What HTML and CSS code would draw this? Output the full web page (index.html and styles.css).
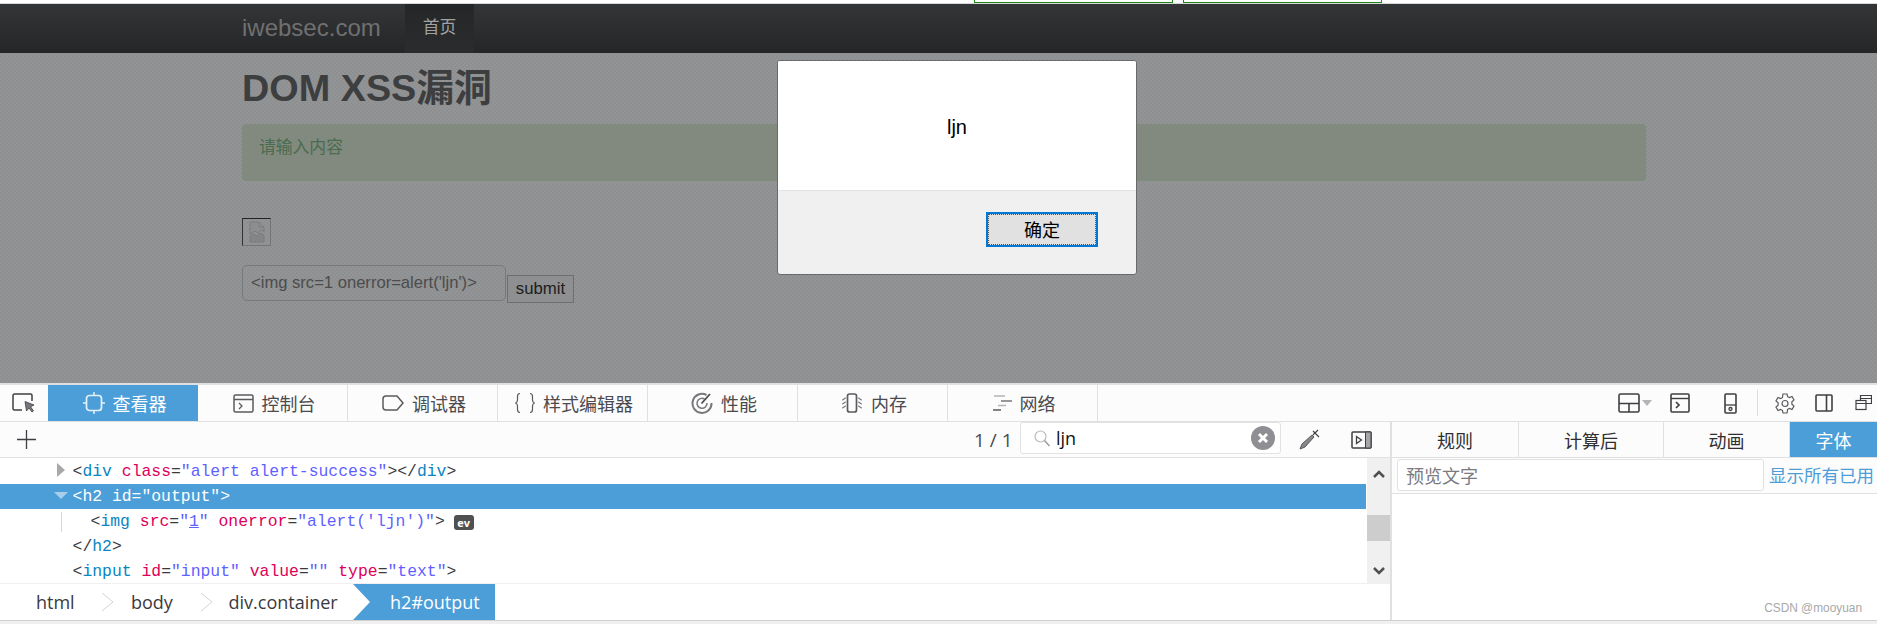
FILE: index.html
```html
<!DOCTYPE html>
<html lang="zh-CN">
<head>
<meta charset="utf-8">
<title>DOM XSS漏洞</title>
<link rel="stylesheet" href="styles.css">
</head>
<body>
<section class="page">
  <div class="strip"><span class="greenbox"></span><span class="greenbox second"></span></div>
  <nav class="navbar">
    <a class="brand">iwebsec.com</a>
    <a class="navitem">首页</a>
  </nav>
  <main class="container">
    <h1 class="title">DOM XSS漏洞</h1>
    <div class="alert">请输入内容</div>
    <div class="brokenimg">
      <svg width="16" height="22" viewBox="0 0 16 22"><path d="M1 1h9l5 5v5l-3-2-3 3-3-2-5 3z" fill="#8d8e8f" stroke="#7b7c7d"/><path d="M10 1v5h5" fill="none" stroke="#7b7c7d"/><path d="M1 15l4-2 3 2 3-3 4 2v7H1z" fill="#848586" stroke="#7b7c7d"/></svg>
    </div>
    <form class="xssform">
      <input class="xssinput" type="text" value="<img src=1 onerror=alert('ljn')>">
      <button class="xssbtn" type="button">submit</button>
    </form>
  </main>
  <div class="dialog">
    <div class="dialog-body">ljn</div>
    <div class="dialog-foot"><button class="dialog-btn" type="button"><span class="dialog-btn-in">确定</span></button></div>
  </div>
</section>

<section class="devtools">
  <header class="tabbar">
    <div class="picker">
      <svg width="24" height="20" viewBox="0 0 24 20"><path d="M10 17H2.500A1.500 1.500 0 0 1 1 15.500V2.500A1.500 1.500 0 0 1 2.500 1h16A1.500 1.500 0 0 1 20 2.500V8" fill="none" stroke="#3f3f43" stroke-width="1.500"/><path d="M13 8.500l9 3.500-3.500 1.800 3 4-1.500 1.200-3-4L14.500 18z" fill="#77777b" stroke="#3f3f43" stroke-width=".8"/></svg>
    </div>
    <div class="tab active">
      <svg width="22" height="22" viewBox="0 0 22 22"><rect x="3.500" y="3.500" width="15" height="15" rx="3" fill="none" stroke="#e4f1fa" stroke-width="1.700"/><path d="M11 0v3M11 19v3M0 11h3M19 11h3" stroke="#e4f1fa" stroke-width="1.500"/></svg>
      <span>查看器</span>
    </div>
    <div class="tab">
      <svg width="21" height="21" viewBox="0 0 21 21"><rect x="1" y="2" width="19" height="17" rx="1.500" fill="none" stroke="#5b5b5f" stroke-width="1.500"/><path d="M1 6.500h19" stroke="#5b5b5f" stroke-width="1.500"/><path d="M6 10l3 3-3 3" fill="none" stroke="#5b5b5f" stroke-width="1.300"/></svg>
      <span>控制台</span>
    </div>
    <div class="tab">
      <svg width="22" height="18" viewBox="0 0 22 18"><path d="M4 2h11l6 7-6 7H4a3 3 0 0 1-3-3V5a3 3 0 0 1 3-3z" fill="none" stroke="#5b5b5f" stroke-width="1.500"/></svg>
      <span>调试器</span>
    </div>
    <div class="tab">
      <svg width="20" height="22" viewBox="0 0 20 22"><path d="M5 1.500c-2 0-2.500 1-2.500 3v3.500c0 1.500-.7 2.500-1.800 3 1.100.5 1.800 1.500 1.800 3v3.500c0 2 .5 3 2.500 3M15 1.500c2 0 2.500 1 2.500 3v3.500c0 1.500.7 2.500 1.800 3-1.100.5-1.800 1.500-1.800 3v3.500c0 2-.5 3-2.500 3" fill="none" stroke="#5b5b5f" stroke-width="1.200"/></svg>
      <span>样式编辑器</span>
    </div>
    <div class="tab">
      <svg width="22" height="22" viewBox="0 0 22 22"><path d="M15.500 3A9.500 9.500 0 1 0 20.500 11" fill="none" stroke="#77777b" stroke-width="2"/><path d="M13.500 7A5 5 0 1 0 16 11" fill="none" stroke="#77777b" stroke-width="1.500"/><path d="M10.500 11.500L19 2" stroke="#4a4a4f" stroke-width="1.800"/></svg>
      <span>性能</span>
    </div>
    <div class="tab">
      <svg width="22" height="20" viewBox="0 0 22 20"><rect x="6.500" y="1" width="9" height="18" rx="2" fill="none" stroke="#5b5b5f" stroke-width="1.700"/><path d="M5 5C3 5 3 7 1 7M5 9C3 9 3 11 1 11M5 13C3 13 3 15 1 15M17 5c2 0 2 2 4 2M17 9c2 0 2 2 4 2M17 13c2 0 2 2 4 2" fill="none" stroke="#77777b" stroke-width="1.100"/></svg>
      <span>内存</span>
    </div>
    <div class="tab">
      <svg width="19" height="18" viewBox="0 0 19 18"><path d="M1 2h11" stroke="#b5b5b8" stroke-width="1.500"/><path d="M8 7h11" stroke="#77777b" stroke-width="1.500"/><path d="M5 11.500h8" stroke="#b5b5b8" stroke-width="1.500"/><path d="M0 16h8" stroke="#5b5b5f" stroke-width="1.500"/></svg>
      <span>网络</span>
    </div>
    <div class="tools">
      <svg width="22" height="20" viewBox="0 0 22 20"><rect x="1" y="1" width="20" height="18" rx="1.500" fill="none" stroke="#3f3f43" stroke-width="1.600"/><path d="M1 10.500h20M11 10.500V19" stroke="#3f3f43" stroke-width="1.600"/></svg>
      <svg class="t-caret" width="10" height="6" viewBox="0 0 10 6"><path d="M0 0h10L5 6z" fill="#b4b4b8"/></svg>
      <svg class="t-console" width="20" height="20" viewBox="0 0 20 20"><rect x="1" y="1" width="18" height="18" rx="1" fill="none" stroke="#3f3f43" stroke-width="1.600"/><path d="M1 5.500h18" stroke="#3f3f43" stroke-width="1.400"/><path d="M6 9l3 3-3 3" fill="none" stroke="#3f3f43" stroke-width="1.700"/></svg>
      <svg class="t-phone" width="13" height="21" viewBox="0 0 13 21"><rect x="1" y="1" width="11" height="19" rx="1" fill="none" stroke="#3f3f43" stroke-width="1.600"/><path d="M1 12h11" stroke="#3f3f43" stroke-width="1.300"/><circle cx="6.500" cy="16" r="1.500" fill="none" stroke="#3f3f43" stroke-width="1.300"/></svg>
      <span class="t-sep"></span>
      <svg class="t-gear" width="20" height="21" viewBox="0 0 20 21"><path d="M8 1h4l.6 2.700 1.900.9 2.500-1.100 2 3.400-2.100 1.800v2.600l2.100 1.800-2 3.400-2.500-1.100-1.900.9L12 20H8l-.6-2.700-1.900-.9-2.500 1.100-2-3.400 2.100-1.800V9.700L1 7.900l2-3.400 2.500 1.100 1.900-.9z" fill="none" stroke="#5b5b5f" stroke-width="1.200"/><circle cx="10" cy="10.500" r="3" fill="none" stroke="#5b5b5f" stroke-width="1.200"/></svg>
      <svg class="t-side" width="18" height="18" viewBox="0 0 18 18"><rect x="1" y="1" width="16" height="16" rx="1" fill="none" stroke="#3f3f43" stroke-width="1.600"/><path d="M11.500 1v16" stroke="#3f3f43" stroke-width="1.600"/></svg>
      <svg class="t-win" width="17" height="18" viewBox="0 0 17 18"><path d="M5.500 6V1.500h11v8H11" fill="none" stroke="#3f3f43" stroke-width="1.200"/><path d="M5.500 4.500h11" stroke="#3f3f43" stroke-width="1"/><rect x="1" y="6.500" width="10" height="9" fill="none" stroke="#3f3f43" stroke-width="1.200"/><path d="M1 9.500h10" stroke="#3f3f43" stroke-width="1"/></svg>
    </div>
  </header>

  <div class="split">
    <div class="inspector">
      <div class="toolbar">
        <svg class="plus" width="19" height="19" viewBox="0 0 19 19"><path d="M9.500 0v19M0 9.500h19" stroke="#3f3f43" stroke-width="1.300"/></svg>
        <span class="count">1 / 1</span>
        <div class="search">
          <svg width="16" height="17" viewBox="0 0 16 17"><circle cx="6.500" cy="6.500" r="5.500" fill="none" stroke="#b8b8bb" stroke-width="1.200"/><path d="M10.500 10.500l5 5.500" stroke="#9a9a9e" stroke-width="1.500"/></svg>
          <span class="search-text">ljn</span>
          <svg class="clear" width="24" height="24" viewBox="0 0 24 24"><circle cx="12" cy="12" r="12" fill="#8f8f93"/><path d="M8 8l8 8M16 8l-8 8" stroke="#fff" stroke-width="3"/></svg>
        </div>
        <svg class="dropper" width="21" height="21" viewBox="0 0 21 21"><path d="M13 6L3 15l-2 5 5-2 9-10z" fill="#88888c" stroke="#5b5b5f" stroke-width="1"/><path d="M14 2l6 6M19 1l-5 5" stroke="#3f3f43" stroke-width="1.100"/></svg>
        <svg class="sidetoggle" width="21" height="18" viewBox="0 0 21 18"><rect x="1" y="1" width="19" height="16" rx="1" fill="none" stroke="#3f3f43" stroke-width="1.500"/><path d="M14.500 1h5.500v16h-5.500z" fill="#a5a5a8" stroke="#3f3f43"/><path d="M5.500 5.500l5 3.500-5 3.500z" fill="none" stroke="#3f3f43" stroke-width="1.300"/></svg>
      </div>
      <div class="markup-wrap">
        <div class="markup">
          <div class="row first"><i class="tw closed"></i><span class="p">&lt;</span><span class="t">div</span> <span class="a">class</span><span class="p">=</span><span class="v">"alert alert-success"</span><span class="p">&gt;&lt;/</span><span class="t">div</span><span class="p">&gt;</span></div>
          <div class="row selected"><i class="tw open"></i>&lt;h2 id="output"&gt;</div>
          <div class="row child"><span class="p">&lt;</span><span class="t">img</span> <span class="a">src</span><span class="p">=</span><span class="v">"<u>1</u>"</span> <span class="a">onerror</span><span class="p">=</span><span class="v">"alert('ljn')"</span><span class="p">&gt;</span> <span class="ev">ev</span></div>
          <div class="row"><i class="tw"></i><span class="p">&lt;/</span><span class="t">h2</span><span class="p">&gt;</span></div>
          <div class="row"><i class="tw"></i><span class="p">&lt;</span><span class="t">input</span> <span class="a">id</span><span class="p">=</span><span class="v">"input"</span> <span class="a">value</span><span class="p">=</span><span class="v">""</span> <span class="a">type</span><span class="p">=</span><span class="v">"text"</span><span class="p">&gt;</span></div>
        </div>
        <div class="scrollbar">
          <div class="sb-up"><svg width="12" height="8" viewBox="0 0 12 8"><path d="M1 7l5-5 5 5" fill="none" stroke="#505050" stroke-width="2.500"/></svg></div>
          <div class="sb-thumb"></div>
          <div class="sb-down"><svg width="12" height="8" viewBox="0 0 12 8"><path d="M1 1l5 5 5-5" fill="none" stroke="#505050" stroke-width="2.500"/></svg></div>
        </div>
      </div>
      <div class="crumbs">
        <span class="crumb c-html">html</span>
        <svg class="chev" width="13" height="36" viewBox="0 0 13 36"><path d="M1 9l11 9-11 9" fill="none" stroke="#d4d4d6"/></svg>
        <span class="crumb c-body">body</span>
        <svg class="chev" width="13" height="36" viewBox="0 0 13 36"><path d="M1 9l11 9-11 9" fill="none" stroke="#d4d4d6"/></svg>
        <span class="crumb c-div">div.container</span>
        <span class="crumb current">h2#output</span>
      </div>
    </div>
    <aside class="sidebar">
      <div class="side-tabs">
        <div class="stab s1">规则</div>
        <div class="stab s2">计算后</div>
        <div class="stab s3">动画</div>
        <div class="stab s4">字体</div>
      </div>
      <div class="fontbar">
        <input class="preview" type="text" placeholder="预览文字">
        <a class="showall">显示所有已用</a>
      </div>
      <div class="watermark">CSDN @mooyuan</div>
    </aside>
  </div>
</section>
<div class="foot"></div>
</body>
</html>
```
FILE: styles.css
```css
* { box-sizing: border-box; }
html, body { margin: 0; padding: 0; }
body {
  width: 1877px;
  height: 624px;
  overflow: hidden;
  position: relative;
  background: #fff;
  font-family: "Liberation Sans", "Noto Sans CJK SC", sans-serif;
}

/* page under the modal */
.page {
  position: relative;
  height: 383px;
  background-color: #909192;
  background-image: repeating-conic-gradient(rgba(255,255,255,.022) 0 25%, rgba(0,0,0,.012) 0 50%);
  background-size: 4px 4px;
}
.strip {
  height: 4px;
  background: #fff;
  border-bottom: 1px solid #d8d8d8;
  display: flex;
  padding-left: 974px;
  align-items: flex-start;
}
.greenbox {
  width: 199px;
  height: 3px;
  background: #fff;
  border: 1px solid #1b8a1b;
  border-top: 0;
}
.greenbox.second { margin-left: 10px; }
.navbar {
  height: 49px;
  display: flex;
  align-items: stretch;
  padding-left: 242px;
  background: linear-gradient(#343536, #252627);
}
.brand {
  width: 163px;
  line-height: 48px;
  font-size: 24px;
  color: #6f7071;
}
.navitem {
  width: 69px;
  line-height: 48px;
  text-align: center;
  font-size: 16.8px;
  color: #a0a1a2;
  background: linear-gradient(#252627, #2b2c2d);
}
.container {
  padding-left: 242px;
  width: 1646px;
}
.title {
  margin: 15px 0 0;
  font-size: 37.800px;
  line-height: 41px;
  font-weight: 700;
  color: #3d3e40;
}
.alert {
  margin-top: 15px;
  height: 57px;
  padding: 11px 16px;
  border: 1px solid #7d8c7b;
  border-radius: 4px;
  background: #828a7f;
  color: #4a6b4e;
  font-size: 16.8px;
  line-height: 24px;
}
.brokenimg {
  margin-top: 37px;
  width: 29px;
  height: 28px;
  border: 1px solid #747576;
  border-top-color: #222;
  border-left-color: #333;
  display: flex;
  align-items: center;
  justify-content: center;
}
.xssform {
  margin-top: 19px;
  display: flex;
  align-items: flex-start;
}
.xssinput {
  width: 264px;
  height: 36px;
  padding: 0 8px;
  border: 1px solid #78797a;
  border-radius: 5px;
  background: transparent;
  color: #4b4c4d;
  font: 16.6px "Liberation Sans", sans-serif;
}
.xssbtn {
  margin: 10px 0 0 1px;
  width: 67px;
  height: 28px;
  padding: 0;
  border: 1px solid #6e6f70;
  background: #8e8f90;
  color: #202020;
  font: 16.8px "Liberation Sans", sans-serif;
}

/* modal */
.dialog {
  position: absolute;
  left: 777px;
  top: 60px;
  width: 360px;
  height: 215px;
  border: 1px solid #6a6a6a;
  border-radius: 3px;
  background: #f0f0f0;
  overflow: hidden;
}
.dialog-body {
  height: 130px;
  padding-top: 4px;
  background: #fff;
  border-bottom: 1px solid #e4e4e4;
  display: flex;
  align-items: center;
  justify-content: center;
  font-size: 20px;
  color: #000;
}
.dialog-foot {
  display: flex;
  justify-content: flex-end;
  padding: 21px 38px 0 0;
}
.dialog-btn {
  width: 112px;
  height: 35px;
  padding: 0;
  background: #e1e1e1;
  border: 2px solid #0078d7;
  font: 18px "Noto Sans CJK SC", sans-serif;
  color: #000;
}
.dialog-btn-in {
  display: block;
  height: 100%;
  line-height: 29px;
  border: 1px dotted #555;
}

/* devtools */
.devtools {
  height: 237px;
  display: flex;
  flex-direction: column;
  font-family: "Noto Sans CJK SC", "Open Sans", sans-serif;
  color: #4a4a4f;
}
.tabbar {
  height: 39px;
  border-top: 2px solid #e0e0e2;
  border-bottom: 1px solid #e0e0e2;
  background: #fcfcfc;
  display: flex;
  align-items: stretch;
  flex: none;
}
.picker {
  width: 48px;
  padding-left: 12px;
  display: flex;
  align-items: center;
}
.tab {
  width: 150px;
  padding-left: 3px;
  border-right: 1px solid #e0e0e2;
  display: flex;
  align-items: center;
  justify-content: center;
  gap: 8px;
  font-size: 18px;
  line-height: 1;
}
.tab.active {
  background: #4c9ed9;
  color: #fff;
  border-right: 0;
}
.tools {
  margin-left: auto;
  display: flex;
  align-items: center;
  padding-right: 5px;
}
.t-caret { margin-left: 2px; }
.t-console { margin-left: 18px; }
.t-phone { margin-left: 34px; }
.t-sep {
  width: 1px;
  height: 26px;
  margin-left: 20px;
  background: #dcdcde;
}
.t-gear { margin-left: 17px; }
.t-side { margin-left: 20px; }
.t-win { margin-left: 22px; }

.split {
  flex: 1;
  display: flex;
  min-height: 0;
}
.inspector {
  width: 1390px;
  display: flex;
  flex-direction: column;
}
.toolbar {
  height: 36px;
  background: #fcfcfc;
  border-bottom: 1px solid #e0e0e2;
  display: flex;
  align-items: center;
  flex: none;
}
.plus { margin-left: 17px; }
.count {
  margin-left: auto;
  font: 19px "Open Sans", sans-serif;
  color: #4a4a4f;
  width: 46px;
}
.search {
  width: 261px;
  height: 32px;
  margin-top: -3px;
  background: #fff;
  border: 1px solid #e2e2e4;
  border-radius: 3px;
  display: flex;
  align-items: center;
  padding: 0 5px 0 13px;
}
.search-text {
  margin-left: 6px;
  font: 18px "Open Sans", sans-serif;
  color: #111;
}
.clear { margin-left: auto; }
.dropper { margin-left: 18px; }
.sidetoggle { margin-left: 31px; margin-right: 18px; }

.markup-wrap {
  height: 126px;
  display: flex;
  border-bottom: 1px solid #f0f0f1;
  flex: none;
}
.markup {
  flex: 1;
  font: 16.400px/25px "Liberation Mono", monospace;
  color: #3a3a3e;
  margin-right: 1px;
}
.row {
  height: 25px;
  padding: 1px 0 0 57px;
  line-height: 24px;
  white-space: pre;
}
.row.first { height: 26px; line-height: 26px; }
.row.child {
  padding-left: 90.600px;
  position: relative;
}
.row.child::before {
  content: "";
  position: absolute;
  left: 61px;
  top: 3px;
  height: 20px;
  width: 1px;
  background: #d8d8da;
}
.row.selected { background: #4c9ed9; color: #fff; }
.tw {
  display: inline-block;
  width: 15.600px;
  height: 14px;
  position: relative;
  vertical-align: -1px;
}
.tw.closed::before {
  content: "";
  position: absolute;
  left: 0;
  top: 0;
  border-left: 8px solid #a8a8aa;
  border-top: 7px solid transparent;
  border-bottom: 7px solid transparent;
}
.tw.open::before {
  content: "";
  position: absolute;
  left: -3px;
  top: 4px;
  border-top: 7px solid #a6cdea;
  border-left: 7px solid transparent;
  border-right: 7px solid transparent;
}
.p { color: #3a3a3e; }
.t { color: #0a84c1; }
.a { color: #dd0058; }
.v { color: #5f5fff; }
.ev {
  display: inline-block;
  width: 20px;
  height: 15px;
  margin-left: -1px;
  border-radius: 3px;
  background: #505050;
  color: #fff;
  font: 700 11px/15px "Open Sans", sans-serif;
  text-align: center;
  vertical-align: -1px;
}
.scrollbar {
  width: 23px;
  background: #f0f0f0;
  display: flex;
  flex-direction: column;
  flex: none;
}
.sb-up {
  height: 57px;
  padding-top: 12px;
  text-align: center;
  line-height: 0;
}
.sb-thumb { height: 26px; background: #cdcdcd; }
.sb-down {
  flex: 1;
  display: flex;
  align-items: flex-end;
  justify-content: center;
  padding-bottom: 8px;
}
.crumbs {
  flex: 1;
  display: flex;
  align-items: stretch;
  background: #fff;
  font: 18px/36px "Open Sans", sans-serif;
  color: #3a3a3e;
}
.c-html { margin-left: 36px; width: 65px; }
.c-body { margin-left: 17px; width: 69px; }
.c-div { margin-left: 15.500px; width: 124.500px; }
.crumb.current {
  width: 142px;
  padding-left: 37px;
  background: #4c9ed9;
  color: #fff;
  clip-path: polygon(0 0, 100% 0, 100% 100%, 0 100%, 17px 50%);
}
.sidebar {
  position: relative;
  flex: 1;
  border-left: 2px solid #dde1e4;
}
.side-tabs {
  height: 36px;
  display: flex;
  border-bottom: 1px solid #e0e0e2;
  background: #fcfcfc;
  font-size: 18px;
  color: #2f2f33;
}
.stab {
  display: flex;
  align-items: center;
  justify-content: center;
  border-right: 1px solid #e0e0e2;
}
.s1 { width: 127px; }
.s2 { width: 145px; }
.s3 { width: 126px; }
.s4 { flex: 1; border-right: 0; background: #4c9ed9; color: #fff; }
.fontbar {
  height: 36px;
  display: flex;
  align-items: center;
  gap: 5px;
  padding: 0 0 2px 5px;
  background: #fcfcfc;
  border-bottom: 1px solid #e0e0e2;
  white-space: nowrap;
  overflow: hidden;
}
.preview {
  width: 367px;
  height: 32px;
  flex: none;
  padding: 0 8px;
  border: 1px solid #e2e2e4;
  border-radius: 3px;
  background: #fff;
  font: 18px "Noto Sans CJK SC", sans-serif;
}
.preview::placeholder { color: #7a7a7f; opacity: 1; }
.showall { color: #4c9ed9; font-size: 17.500px; }
.watermark {
  position: absolute;
  right: 15px;
  bottom: 5px;
  font: 12.500px "Liberation Sans", sans-serif;
  color: #a8a8a8;
  transform: scaleX(.95);
  transform-origin: right center;
}
.foot {
  height: 4px;
  background: #f0f0f0;
  border-top: 1px solid #d0d0d0;
}
```
